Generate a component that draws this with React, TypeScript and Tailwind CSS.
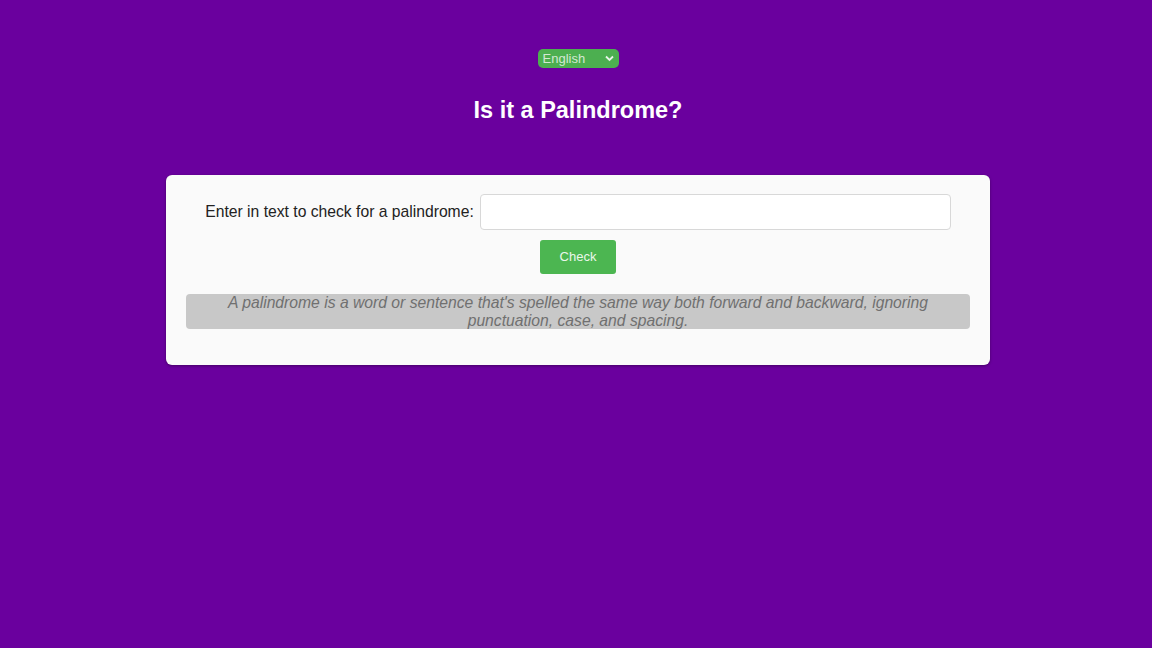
import React, { useState } from 'react';

export default function App() {
  const [text, setText] = useState('');

  return (
    <div className="min-h-screen w-full bg-[#6a009e] font-['Liberation_Sans',Arial,sans-serif] pt-[49px] pl-1">
      <div className="flex justify-center">
        <div className="relative w-[81px] h-[19px] rounded-[5px] bg-[#4caf50] flex items-center">
          <span className="text-[13px] leading-[19px] text-[#d3e8d3] pl-[5px]">English</span>
          <svg className="absolute right-[5px] top-[6px] pointer-events-none" width="9" height="7" viewBox="0 0 9 7">
            <path d="M1 1.5 L4.5 5 L8 1.5" fill="none" stroke="#e8f4e8" strokeWidth="1.8" />
          </svg>
        </div>
      </div>

      <h1 className="text-center text-white font-bold text-[23.5px] leading-[26px] mt-[29px]">Is it a Palindrome?</h1>

      <div className="mx-auto mt-[52px] w-[824px] bg-[#fafafa] rounded-[6px] shadow-[0_1px_3px_rgba(0,0,0,0.35)] px-5 pt-[19px] pb-[36px]">
        <div className="flex items-center justify-center gap-[6px]">
          <label className="text-[15.7px] text-[#222]">Enter in text to check for a palindrome:</label>
          <input
            value={text}
            onChange={e => setText(e.target.value)}
            className="w-[471px] h-[36px] rounded-[4px] border border-[#d8d8d8] bg-white px-2 outline-none"
          />
        </div>
        <div className="flex justify-center mt-[10px]">
          <button className="w-[76px] h-[34px] rounded-[3px] bg-[#4cb651] text-[#eaf6ea] text-[13px]">Check</button>
        </div>
        <div className="mt-[20px] rounded-[4px] bg-[#c8c8c8] px-4 h-[35px] text-center italic text-[15.7px] leading-[18px] text-[#707070]">
          A palindrome is a word or sentence that's spelled the same way both forward and backward, ignoring punctuation, case, and spacing.
        </div>
      </div>
    </div>
  );
}
